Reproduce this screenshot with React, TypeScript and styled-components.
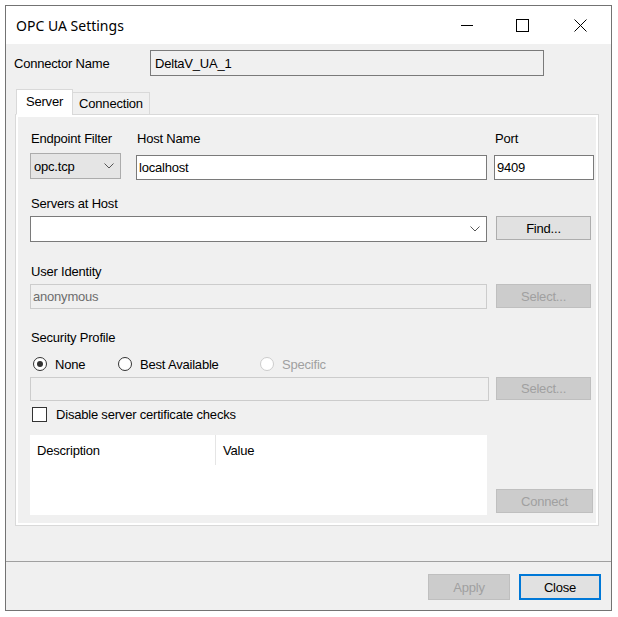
import React from "react";
import styled, { createGlobalStyle } from "styled-components";

const GlobalStyle = createGlobalStyle`
  html, body {
    margin: 0;
    padding: 0;
    background: #ffffff;
  }
  * {
    box-sizing: border-box;
  }
`;

const Window = styled.div`
  margin: 5px;
  width: 607px;
  height: 606px;
  border: 1px solid #737373;
  background: #f0f0f0;
  display: flex;
  flex-direction: column;
  font-family: "Liberation Sans", Arial, sans-serif;
  font-size: 13px;
  letter-spacing: -0.2px;
  color: #000;
`;

const TitleBar = styled.div`
  height: 38px;
  flex: none;
  background: #ffffff;
  display: flex;
  align-items: center;
  padding: 0 2px 0 10px;
`;

const Title = styled.div`
  flex: 1;
  font-family: "Noto Sans", "Open Sans", sans-serif;
  font-size: 14px;
  letter-spacing: 0;
`;

const CaptionButton = styled.div<{ $pl?: number }>`
  width: 58px;
  height: 38px;
  display: flex;
  align-items: center;
  justify-content: center;
  padding-left: ${(p) => p.$pl ?? 0}px;
`;

const Client = styled.div`
  flex: 1;
  display: flex;
  flex-direction: column;
`;

const NameRow = styled.div`
  display: flex;
  align-items: center;
  padding: 6px 0 0 8px;
`;

const NameLabel = styled.span`
  width: 136px;
`;

const TextBox = styled.div<{ $w?: number; $disabled?: boolean; $readOnly?: boolean; $h?: number; $mt?: number }>`
  width: ${(p) => (p.$w ? `${p.$w}px` : "100%")};
  height: ${(p) => p.$h ?? 25}px;
  margin-top: ${(p) => p.$mt ?? 0}px;
  border: 1px solid ${(p) => (p.$disabled ? "#cccccc" : "#7a7a7a")};
  background: ${(p) => (p.$disabled || p.$readOnly ? "#f0f0f0" : "#ffffff")};
  color: ${(p) => (p.$disabled ? "#6d6d6d" : "#000")};
  display: flex;
  align-items: center;
  padding-left: ${(p) => (p.$readOnly ? 4 : 2)}px;
`;

const TabArea = styled.div`
  margin: 13px 0 0 9px;
  width: 584px;
`;

const TabStrip = styled.div`
  display: flex;
  align-items: flex-end;
  height: 26px;
  padding-left: 1px;
  margin-bottom: -1px;
  position: relative;
  z-index: 1;
`;

const Tab = styled.div<{ $active?: boolean; $w: number }>`
  width: ${(p) => p.$w}px;
  height: ${(p) => (p.$active ? 26 : 23)}px;
  border: 1px solid #d9d9d9;
  border-bottom-color: ${(p) => (p.$active ? "#ffffff" : "#d9d9d9")};
  background: ${(p) => (p.$active ? "#ffffff" : "#f0f0f0")};
  display: flex;
  align-items: center;
  justify-content: center;
  padding-bottom: ${(p) => (p.$active ? 2 : 0)}px;
  margin-left: ${(p) => (p.$active ? 0 : -1)}px;
`;

const Panel = styled.div`
  width: 584px;
  height: 412px;
  border: 1px solid #d9d9d9;
  background: #ffffff;
  padding: 2px;
`;

const Page = styled.div`
  height: 100%;
  background: #f0f0f0;
  display: flex;
  flex-direction: column;
  padding: 14px 0 0 12px;
`;

const Label = styled.div<{ $mt?: number }>`
  line-height: 16px;
  height: 16px;
  padding-left: 1px;
  margin-top: ${(p) => p.$mt ?? 0}px;
  white-space: nowrap;
`;

const FieldRow = styled.div`
  display: flex;
  align-items: flex-start;
`;

const Field = styled.div<{ $w: number; $ml?: number }>`
  width: ${(p) => p.$w}px;
  margin-left: ${(p) => p.$ml ?? 0}px;
  display: flex;
  flex-direction: column;
`;

const ControlRow = styled.div<{ $mt?: number; $end?: boolean }>`
  display: grid;
  grid-template-columns: 457px 95px;
  column-gap: 9px;
  align-items: ${(p) => (p.$end ? "end" : "start")};
  margin-top: ${(p) => p.$mt ?? 0}px;
`;

const Combo = styled.div<{ $flat?: boolean; $mt?: number }>`
  height: 26px;
  margin-top: ${(p) => p.$mt ?? 0}px;
  border: 1px solid ${(p) => (p.$flat ? "#acacac" : "#7a7a7a")};
  background: ${(p) => (p.$flat ? "#e5e5e5" : "#ffffff")};
  display: flex;
  align-items: center;
  justify-content: space-between;
  padding: 0 6px 0 3px;
`;

const Button = styled.div<{ $w?: number; $h?: number; $disabled?: boolean; $default?: boolean; $mb?: number }>`
  width: ${(p) => (p.$w ? `${p.$w}px` : "100%")};
  height: ${(p) => p.$h ?? 24}px;
  margin-bottom: ${(p) => p.$mb ?? 0}px;
  border: 1px solid ${(p) => (p.$default ? "#0078d7" : p.$disabled ? "#bfbfbf" : "#adadad")};
  box-shadow: ${(p) => (p.$default ? "inset 0 0 0 1px #0078d7" : "none")};
  background: ${(p) => (p.$disabled ? "#cccccc" : "#e1e1e1")};
  color: ${(p) => (p.$disabled ? "#a0a0a0" : "#000")};
  display: flex;
  align-items: center;
  justify-content: center;
`;

const RadioRow = styled.div`
  display: grid;
  grid-template-columns: 85px 142px auto;
  margin-top: 10px;
  padding-left: 3px;
  height: 16px;
  align-items: center;
`;

const RadioItem = styled.label<{ $disabled?: boolean }>`
  display: flex;
  align-items: center;
  gap: 8px;
  color: ${(p) => (p.$disabled ? "#a0a0a0" : "#000")};
`;

const RadioCircle = styled.span<{ $checked?: boolean; $disabled?: boolean }>`
  width: 14px;
  height: 14px;
  border-radius: 50%;
  border: 1px solid ${(p) => (p.$disabled ? "#cccccc" : "#333333")};
  background: #ffffff;
  display: flex;
  align-items: center;
  justify-content: center;

  &::after {
    content: "";
    width: 6px;
    height: 6px;
    border-radius: 50%;
    background: ${(p) => (p.$checked ? "#333333" : "transparent")};
  }
`;

const CheckRow = styled.label`
  display: flex;
  align-items: center;
  gap: 9px;
  margin-top: 5px;
  padding-left: 2px;
  height: 16px;
`;

const CheckBox = styled.span`
  width: 15px;
  height: 15px;
  border: 1px solid #333333;
  background: #ffffff;
`;

const ListView = styled.div`
  height: 80px;
  background: #ffffff;
`;

const ListHeader = styled.div`
  display: grid;
  grid-template-columns: 186px 1fr;
  height: 30px;
`;

const HeaderCell = styled.div<{ $sep?: boolean }>`
  display: flex;
  align-items: center;
  padding-left: 7px;
  border-right: ${(p) => (p.$sep ? "1px solid #e5e5e5" : "none")};
`;

const Spacer = styled.div`
  flex: 1;
`;

const Footer = styled.div`
  height: 49px;
  border-top: 1px solid #a0a0a0;
  display: flex;
  justify-content: flex-end;
  gap: 9px;
  padding: 12px 10px 0 0;
`;

const Chevron = () => (
  <svg width="10" height="6" viewBox="0 0 10 6">
    <path d="M0.5 0.5 L5 5 L9.5 0.5" fill="none" stroke="#555" strokeWidth="1" />
  </svg>
);

export default function App() {
  return (
    <>
      <GlobalStyle />
      <Window>
        <TitleBar>
          <Title>OPC UA Settings</Title>
          <CaptionButton $pl={6}>
            <svg width="12" height="12" viewBox="0 0 12 12">
              <path d="M0 6.5 H12" stroke="#000" strokeWidth="1" />
            </svg>
          </CaptionButton>
          <CaptionButton>
            <svg width="13" height="13" viewBox="0 0 13 13">
              <rect x="0.5" y="0.5" width="12" height="12" fill="none" stroke="#000" strokeWidth="1" />
            </svg>
          </CaptionButton>
          <CaptionButton>
            <svg width="13" height="13" viewBox="0 0 13 13">
              <path d="M0.5 0.5 L12.5 12.5 M12.5 0.5 L0.5 12.5" stroke="#000" strokeWidth="1" />
            </svg>
          </CaptionButton>
        </TitleBar>
        <Client>
          <NameRow>
            <NameLabel>Connector Name</NameLabel>
            <TextBox $w={394} $h={26} $readOnly>
              DeltaV_UA_1
            </TextBox>
          </NameRow>
          <TabArea>
            <TabStrip>
              <Tab $active $w={57}>Server</Tab>
              <Tab $w={78}>Connection</Tab>
            </TabStrip>
            <Panel>
              <Page>
                <FieldRow>
                  <Field $w={91}>
                    <Label>Endpoint Filter</Label>
                    <Combo $flat $mt={6}>
                      <span>opc.tcp</span>
                      <Chevron />
                    </Combo>
                  </Field>
                  <Field $w={351} $ml={15}>
                    <Label>Host Name</Label>
                    <TextBox $mt={8}>localhost</TextBox>
                  </Field>
                  <Field $w={100} $ml={7}>
                    <Label>Port</Label>
                    <TextBox $mt={8}>9409</TextBox>
                  </Field>
                </FieldRow>

                <Label $mt={16}>Servers at Host</Label>
                <ControlRow $mt={4}>
                  <Combo>
                    <span />
                    <Chevron />
                  </Combo>
                  <Button>Find...</Button>
                </ControlRow>

                <Label $mt={22}>User Identity</Label>
                <ControlRow $mt={4}>
                  <TextBox $disabled>anonymous</TextBox>
                  <Button $disabled>Select...</Button>
                </ControlRow>

                <Label $mt={21}>Security Profile</Label>
                <RadioRow>
                  <RadioItem>
                    <RadioCircle $checked />
                    None
                  </RadioItem>
                  <RadioItem>
                    <RadioCircle />
                    Best Available
                  </RadioItem>
                  <RadioItem $disabled>
                    <RadioCircle $disabled />
                    Specific
                  </RadioItem>
                </RadioRow>
                <ControlRow $mt={5}>
                  <TextBox $disabled $h={24} $w={459} />
                  <Button $disabled $h={23}>Select...</Button>
                </ControlRow>

                <CheckRow>
                  <CheckBox />
                  Disable server certificate checks
                </CheckRow>

                <ControlRow $mt={13} $end>
                  <ListView>
                    <ListHeader>
                      <HeaderCell $sep>Description</HeaderCell>
                      <HeaderCell>Value</HeaderCell>
                    </ListHeader>
                  </ListView>
                  <Button $disabled $w={97} $mb={2}>
                    Connect
                  </Button>
                </ControlRow>
              </Page>
            </Panel>
          </TabArea>
          <Spacer />
          <Footer>
            <Button $disabled $w={82} $h={26}>Apply</Button>
            <Button $default $w={82} $h={26}>Close</Button>
          </Footer>
        </Client>
      </Window>
    </>
  );
}
